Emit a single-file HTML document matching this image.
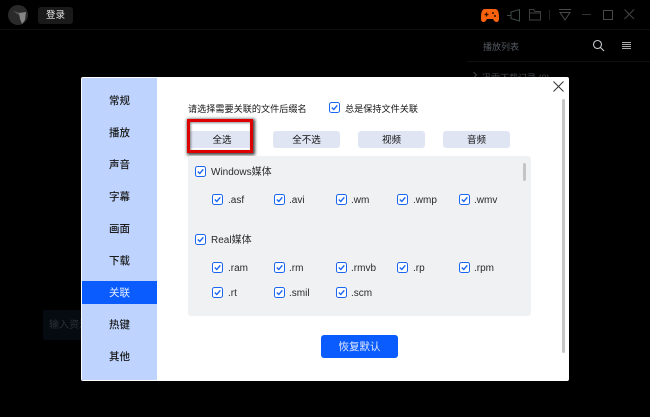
<!DOCTYPE html>
<html><head><meta charset="utf-8">
<style>
html,body{margin:0;padding:0;background:#000;}
#r{position:relative;width:650px;height:417px;overflow:hidden;background:#000;font-family:"Liberation Sans","Noto Sans CJK SC",sans-serif;font-size:10px;color:#222;}
#r div,#r span,#r svg{position:absolute;}
.t{white-space:nowrap;line-height:14px;}
.nav{left:82px;width:75px;text-align:center;font-size:10.5px;line-height:14px;color:#1a1a1a;font-weight:500;}
.btn{background:#dfe5f3;border-radius:3px;height:17px;line-height:19px;text-align:center;font-size:9.5px;color:#111;top:131px;}
.c{width:9px;height:9px;border:1.3px solid #1a66f0;border-radius:2.5px;background:#fff;}
.c svg{left:1px;top:1px;width:7px;height:7px;}
.l{white-space:nowrap;font-size:10px;line-height:14px;color:#2a2a2a;}
</style></head><body>
<div id="r">
<!-- top bar -->
<div style="left:0;top:29px;width:650px;height:1px;background:#0d0d0d"></div>
<div style="left:8px;top:5px;width:20px;height:20px;border-radius:50%;background:#2a2a2a"></div>
<svg style="left:8px;top:5px" width="20" height="20"><path d="M5 6 L11 7.500 L13 11 L10 9.500Z" fill="#555"/><path d="M11 8 L18 7 L17 15 L14 19 L12 14 Z" fill="#858585"/></svg>
<div style="left:38px;top:7px;width:35px;height:17px;background:#1a1a1a;border-radius:3px"></div>
<div class="t" style="left:46px;top:9px;color:#e8e8e8;font-size:9.5px">登录</div>

<svg style="left:480px;top:8px" width="20" height="15"><path d="M5 1 H15 Q19 1 19 9 Q19.5 14 16.500 14 Q14.500 14 13 11 H7 Q5.500 14 3.500 14 Q0.500 14 1 9 Q1 1 5 1Z" fill="#f9620c"/><path d="M4.500 6.500h4M6.500 4.500v4" stroke="#301000" stroke-width="1.300"/><circle cx="13" cy="5" r="1" fill="#301000"/><circle cx="15" cy="8" r="1" fill="#301000"/></svg>
<svg style="left:507px;top:8px" width="16" height="14" fill="none" stroke="#3c4a44" stroke-width="1"><path d="M0 7.500H4M4 4 L12.500 1.500 V13 L4 10.500Z"/></svg>
<svg style="left:528px;top:8px" width="14" height="13" fill="none" stroke="#3f3f3f" stroke-width="1"><path d="M1.500 1.500H5.500L7 3.500H12.500V12H1.500ZM1.500 5H12.500"/></svg>
<div style="left:549px;top:10px;width:1px;height:10px;background:#222"></div>
<svg style="left:559px;top:9px" width="13" height="12" fill="none" stroke="#4a4a4a" stroke-width="1"><path d="M0 .5H12M1 3.500H11L6 11Z"/></svg>
<div style="left:582px;top:14px;width:9px;height:1px;background:#333"></div>
<div style="left:603px;top:10px;width:8px;height:8px;border:1px solid #484848"></div>
<svg style="left:624px;top:9px" width="11" height="11" stroke="#444" stroke-width="1"><path d="M.5 .5L10 10M10 .5L.5 10"/></svg>

<div class="t" style="left:483px;top:40px;color:#555a62;font-size:9px">播放列表</div>
<svg style="left:592px;top:39px" width="14" height="13" fill="none" stroke="#c8ccd0" stroke-width="1.100"><circle cx="5.500" cy="5.500" r="4"/><path d="M8.500 8.500L12 12"/></svg>
<div style="left:622px;top:42px;width:9px;height:1px;background:#aaa"></div>
<div style="left:622px;top:44px;width:9px;height:1px;background:#aaa"></div>
<div style="left:622px;top:46px;width:9px;height:1px;background:#aaa"></div>
<div style="left:622px;top:48px;width:9px;height:1px;background:#aaa"></div>
<div style="left:467px;top:61px;width:183px;height:1px;background:#101010"></div>
<svg style="left:473px;top:72px" width="5" height="6" fill="none" stroke="#444" stroke-width="1"><path d="M.5 0L3.500 3L.5 6"/></svg>
<div class="t" style="left:482px;top:71px;color:#44484e;font-size:9px">迅雷下载记录 (0)</div>

<!-- left input -->
<div style="left:43px;top:310px;width:40px;height:30px;background:#060b12;border-radius:2px"></div>
<div class="t" style="left:49px;top:319px;color:#2c3036;font-size:10px;width:32px;overflow:hidden">输入资源</div>

<!-- dialog -->
<div style="left:81px;top:77px;width:488px;height:304px;background:#fff;border-radius:2px"></div>
<div style="left:82px;top:78px;width:75px;height:302px;background:#bed4ff"></div>
<div class="nav" style="top:94px">常规</div>
<div class="nav" style="top:126px">播放</div>
<div class="nav" style="top:158px">声音</div>
<div class="nav" style="top:190px">字幕</div>
<div class="nav" style="top:222px">画面</div>
<div class="nav" style="top:254px">下载</div>
<div style="left:82px;top:281px;width:75px;height:23px;background:#0a5cff"></div>
<div class="nav" style="top:286px;color:#e8f0ff;font-weight:400">关联</div>
<div class="nav" style="top:318px">热键</div>
<div class="nav" style="top:350px">其他</div>

<svg style="left:553px;top:81px" width="11" height="11" stroke="#333" stroke-width="1"><path d="M.5 .5L10.500 10.500M10.500 .5L.5 10.500"/></svg>
<div style="left:562px;top:99px;width:3px;height:254px;background:#c6c6c6;border-radius:2px"></div>

<div class="t" style="left:188px;top:102px;font-size:9.15px;color:#111">请选择需要关联的文件后缀名</div>
<div class="c" style="left:329px;top:102px"><svg viewBox="0 0 7 7"><path d="M.8 3.500L2.800 5.500L6.300 1.300" fill="none" stroke="#1a66f0" stroke-width="1.400"/></svg></div>
<div class="t" style="left:345px;top:102px;font-size:9.15px;color:#111">总是保持文件关联</div>

<div class="btn" style="left:189px;width:64px;text-indent:2px">全选</div>
<div style="left:187px;top:119px;width:60px;height:28px;border:3px solid #dc0000;box-shadow:1px 1px 3px 1px rgba(0,0,0,.75),inset 1px 1px 2px rgba(0,0,0,.45)"></div>
<div class="btn" style="left:273px;width:67px">全不选</div>
<div class="btn" style="left:358px;width:67px">视频</div>
<div class="btn" style="left:443px;width:67px">音频</div>

<div style="left:188px;top:156px;width:343px;height:160px;background:#f0f1f3;border-radius:3px"></div>
<div style="left:523px;top:163px;width:3px;height:18px;background:#c4c4c4;border-radius:2px"></div>

<div class="c" style="left:195px;top:166px"><svg viewBox="0 0 7 7"><path d="M.8 3.500L2.800 5.500L6.300 1.300" fill="none" stroke="#1a66f0" stroke-width="1.400"/></svg></div>
<div class="l" style="left:211px;top:166px;font-size:10px">Windows媒体</div>

<div class="c" style="left:212px;top:194px"><svg viewBox="0 0 7 7"><path d="M.8 3.500L2.800 5.500L6.300 1.300" fill="none" stroke="#1a66f0" stroke-width="1.400"/></svg></div><div class="l" style="left:228px;top:194px">.asf</div>
<div class="c" style="left:274px;top:194px"><svg viewBox="0 0 7 7"><path d="M.8 3.500L2.800 5.500L6.300 1.300" fill="none" stroke="#1a66f0" stroke-width="1.400"/></svg></div><div class="l" style="left:289px;top:194px">.avi</div>
<div class="c" style="left:336px;top:194px"><svg viewBox="0 0 7 7"><path d="M.8 3.500L2.800 5.500L6.300 1.300" fill="none" stroke="#1a66f0" stroke-width="1.400"/></svg></div><div class="l" style="left:351px;top:194px">.wm</div>
<div class="c" style="left:397px;top:194px"><svg viewBox="0 0 7 7"><path d="M.8 3.500L2.800 5.500L6.300 1.300" fill="none" stroke="#1a66f0" stroke-width="1.400"/></svg></div><div class="l" style="left:413px;top:194px">.wmp</div>
<div class="c" style="left:459px;top:194px"><svg viewBox="0 0 7 7"><path d="M.8 3.500L2.800 5.500L6.300 1.300" fill="none" stroke="#1a66f0" stroke-width="1.400"/></svg></div><div class="l" style="left:474px;top:194px">.wmv</div>

<div class="c" style="left:195px;top:234px"><svg viewBox="0 0 7 7"><path d="M.8 3.500L2.800 5.500L6.300 1.300" fill="none" stroke="#1a66f0" stroke-width="1.400"/></svg></div>
<div class="l" style="left:211px;top:234px;font-size:10px">Real媒体</div>

<div class="c" style="left:212px;top:262px"><svg viewBox="0 0 7 7"><path d="M.8 3.500L2.800 5.500L6.300 1.300" fill="none" stroke="#1a66f0" stroke-width="1.400"/></svg></div><div class="l" style="left:228px;top:262px">.ram</div>
<div class="c" style="left:274px;top:262px"><svg viewBox="0 0 7 7"><path d="M.8 3.500L2.800 5.500L6.300 1.300" fill="none" stroke="#1a66f0" stroke-width="1.400"/></svg></div><div class="l" style="left:289px;top:262px">.rm</div>
<div class="c" style="left:336px;top:262px"><svg viewBox="0 0 7 7"><path d="M.8 3.500L2.800 5.500L6.300 1.300" fill="none" stroke="#1a66f0" stroke-width="1.400"/></svg></div><div class="l" style="left:351px;top:262px">.rmvb</div>
<div class="c" style="left:397px;top:262px"><svg viewBox="0 0 7 7"><path d="M.8 3.500L2.800 5.500L6.300 1.300" fill="none" stroke="#1a66f0" stroke-width="1.400"/></svg></div><div class="l" style="left:413px;top:262px">.rp</div>
<div class="c" style="left:459px;top:262px"><svg viewBox="0 0 7 7"><path d="M.8 3.500L2.800 5.500L6.300 1.300" fill="none" stroke="#1a66f0" stroke-width="1.400"/></svg></div><div class="l" style="left:474px;top:262px">.rpm</div>

<div class="c" style="left:212px;top:287px"><svg viewBox="0 0 7 7"><path d="M.8 3.500L2.800 5.500L6.300 1.300" fill="none" stroke="#1a66f0" stroke-width="1.400"/></svg></div><div class="l" style="left:228px;top:287px">.rt</div>
<div class="c" style="left:274px;top:287px"><svg viewBox="0 0 7 7"><path d="M.8 3.500L2.800 5.500L6.300 1.300" fill="none" stroke="#1a66f0" stroke-width="1.400"/></svg></div><div class="l" style="left:289px;top:287px">.smil</div>
<div class="c" style="left:336px;top:287px"><svg viewBox="0 0 7 7"><path d="M.8 3.500L2.800 5.500L6.300 1.300" fill="none" stroke="#1a66f0" stroke-width="1.400"/></svg></div><div class="l" style="left:351px;top:287px">.scm</div>

<div style="left:321px;top:335px;width:77px;height:23px;line-height:25px;background:#0a5cff;border-radius:3px;color:#dfe9ff;text-align:center;font-size:10.5px">恢复默认</div>
</div>
</body></html>
